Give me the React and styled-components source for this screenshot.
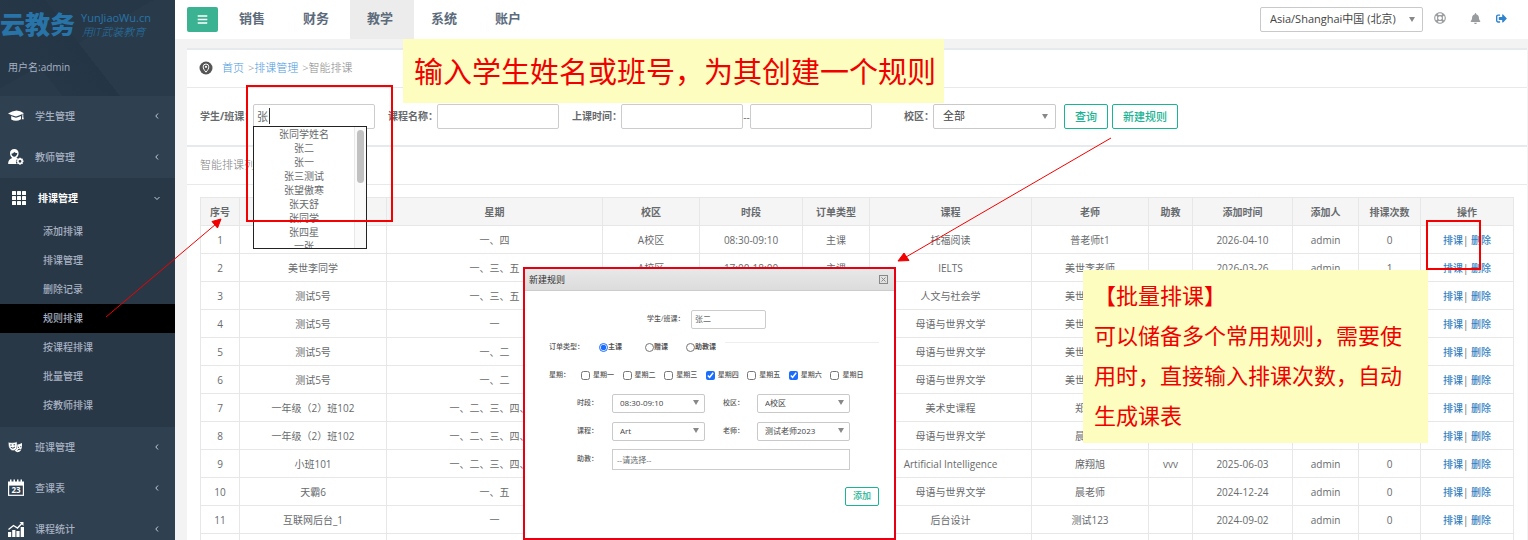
import { useState } from "react";
import styled, { createGlobalStyle, css } from "styled-components";
import { FaBars, FaBell, FaSignOutAlt, FaRegLifeRing } from "react-icons/fa";

const GlobalStyle = createGlobalStyle`
  *, *::before, *::after {
    box-sizing: border-box;
  }

  body {
    margin: 0;
    background: #f3f3f4;
    color: #676a6c;
    font-family: "Open Sans", "Noto Sans CJK SC", sans-serif;
    font-size: 10px;
    line-height: 14px;
  }

  button, input, select, textarea {
    font-family: inherit;
    color: inherit;
  }

  a {
    text-decoration: none;
  }
`;

const Shell = styled.div`
  position: relative;
  display: flex;
  height: 100vh;
  overflow: hidden;
`;

/* ---------- sidebar ---------- */

const Sidebar = styled.aside`
  flex: 0 0 175px;
  background: #2f4050;
  color: #a7b1c2;
  font-weight: 500;
`;

const Brand = styled.div`
  display: flex;
  flex-direction: column;
  gap: 18px;
  height: 96px;
  padding-top: 10px;
  background: linear-gradient(232deg, transparent 52%, #243545 52%, #263747 75%, transparent 75%),
    linear-gradient(150deg, #263848 45%, #293b4a 45%);
`;

const Logo = styled.div`
  display: flex;
  gap: 6px;
  height: 30px;
  color: #2874a8;
`;

const LogoName = styled.strong`
  font-size: 25px;
  font-weight: 900;
  line-height: 28px;
`;

const LogoText = styled.div`
  display: flex;
  flex-direction: column;
  font-size: 11px;
  line-height: 15px;
  white-space: nowrap;
`;

const Slogan = styled.span`
  padding-left: 1px;
  font-style: italic;
  font-weight: 300;
  line-height: 14px;
`;

const UserName = styled.div`
  padding-left: 8px;
  font-weight: 400;
  line-height: 18px;
`;

const MenuGroup = styled.div`
  background: ${({ $open }) => ($open ? "#293846" : "transparent")};
  padding-bottom: ${({ $open }) => ($open ? "7px" : "0")};
`;

const MenuItem = styled.a`
  display: grid;
  grid-template-columns: 16px 1fr 6px;
  gap: 11px;
  align-items: center;
  height: 41px;
  padding: 0 15px 2px 8px;
  color: inherit;

  svg {
    display: block;
    color: #fff;
  }

  ${({ $open }) =>
    $open &&
    css`
      height: 39px;
      padding-bottom: 0;
      padding-left: 11px;
      color: #fff;
      font-weight: 700;
    `}
`;

const SubItem = styled.a`
  display: block;
  height: 29px;
  padding-left: 43px;
  background: ${({ $active }) => ($active ? "#000" : "transparent")};
  color: inherit;
  line-height: 29px;
`;

/* ---------- top bar ---------- */

const Main = styled.main`
  flex: 1;
  min-width: 0;
`;

const TopBar = styled.header`
  display: flex;
  align-items: center;
  height: 39px;
  padding: 0 21px 0 12px;
  background: #fff;
`;

const MenuToggle = styled.button`
  display: flex;
  align-items: center;
  justify-content: center;
  width: 31px;
  height: 25px;
  margin-right: 4px;
  border: 0;
  border-radius: 2px;
  background: #3bb392;
  color: #fff;
`;

const Nav = styled.nav`
  display: flex;
  flex: 1;
`;

const NavLink = styled.a`
  width: 64px;
  height: 39px;
  padding-left: 17px;
  background: ${({ $active }) => ($active ? "#ececec" : "transparent")};
  color: #5c6b7c;
  font-size: 13px;
  font-weight: 700;
  line-height: 36px;
`;

const Tools = styled.div`
  display: flex;
  align-items: center;
  margin-left: 11px;
  padding-bottom: 3px;
  color: #999c9e;
`;

const IconButton = styled.button`
  display: flex;
  justify-content: center;
  width: 12px;
  margin-right: ${({ $gap }) => $gap || 0}px;
  padding: 0;
  border: 0;
  background: none;
  color: ${({ $blue }) => ($blue ? "#2f83cc" : "inherit")};
`;

/* ---------- form parts ---------- */

const SelectBox = styled.span`
  position: relative;
  display: inline-block;
  width: ${({ $width }) => $width}px;
  flex: none;

  &::after {
    content: "";
    position: absolute;
    top: 50%;
    right: ${({ $small }) => ($small ? 6 : 8)}px;
    margin-top: -3px;
    border: solid transparent;
    border-width: ${({ $small }) => ($small ? "5px 3px 0" : "5px 3px 0")};
    border-top-color: #888;
    pointer-events: none;
  }
`;

const Select = styled.select`
  display: block;
  width: 100%;
  height: ${({ $small }) => ($small ? 19 : 25)}px;
  padding: 0 16px 2px ${({ $small }) => ($small ? 7 : 9)}px;
  border: 1px solid #c9c9c9;
  border-radius: 2px;
  appearance: none;
  background: #fff;
  color: #444;
  font-size: ${({ $small }) => ($small ? 8 : 11)}px;
`;

const Input = styled.input`
  width: ${({ $small }) => ($small ? 75 : 122)}px;
  height: ${({ $small }) => ($small ? 19 : 25)}px;
  padding: 0 3px 2px;
  flex: none;
  border: 1px solid #ccc;
  border-radius: 2px;
  background: #fff;
  font-size: ${({ $small }) => ($small ? 8 : 11)}px;
  outline: none;
`;

const OutlineButton = styled.button`
  height: ${({ $small }) => ($small ? 19 : 25)}px;
  padding: 0 ${({ $small }) => ($small ? 7 : 10)}px 2px;
  border: 1px solid #1ab394;
  border-radius: 2px;
  background: #fff;
  color: #1ab394;
  font-size: ${({ $small }) => ($small ? 9 : 11)}px;
  font-weight: 500;
  white-space: nowrap;
`;

/* ---------- page ---------- */

const Panel = styled.section`
  margin: 9px 1px 0 12px;
  border-top: 2px solid #e7eaec;
  background: #fff;
`;

const Crumbs = styled.nav`
  display: flex;
  align-items: center;
  height: 38px;
  padding: 0 0 2px 12px;
  border-bottom: 1px solid #e7eaec;
  color: #888;
  font-size: 11px;
  font-weight: 300;

  svg {
    margin-right: 9px;
  }

  a {
    color: #4a98dc;
  }
`;

const Separator = styled.span`
  padding-left: 4px;
`;

const Filters = styled.form`
  display: flex;
  align-items: center;
  height: 59px;
  padding-left: 13px;
  border-bottom: 2px solid #e7eaec;
`;

const Field = styled.div`
  position: relative;
  display: flex;
  align-items: center;
  margin-right: ${({ $gap }) => $gap}px;
`;

const FieldLabel = styled.label`
  width: ${({ $width }) => $width}px;
  padding-bottom: 2px;
  font-weight: 700;
  white-space: nowrap;
`;

const Caret = styled.span`
  position: absolute;
  top: 4px;
  right: 105px;
  width: 1px;
  height: 16px;
  background: #333;
`;

const Dash = styled.span`
  width: 7px;
  text-align: center;
`;

const Suggestions = styled.ul`
  position: absolute;
  z-index: 2;
  top: 22px;
  right: 8px;
  width: 114px;
  height: 123px;
  margin: 0;
  padding: 0 12px 0 0;
  overflow: hidden;
  border: 1px solid #222;
  background: #fff;
  list-style: none;
  text-align: center;

  &::before {
    content: "";
    position: absolute;
    top: 0;
    right: 0;
    width: 12px;
    height: 100%;
    border-left: 1px solid #e8e8e8;
    background: #fafafa;
  }

  &::after {
    content: "";
    position: absolute;
    top: 3px;
    right: 2px;
    width: 7px;
    height: 53px;
    border-radius: 4px;
    background: #c1c1c1;
  }
`;

const ListTitle = styled.h5`
  height: 38px;
  margin: 0;
  padding-left: 13px;
  border-bottom: 1px solid #e7eaec;
  color: #808385;
  font-size: 11px;
  font-weight: 300;
  line-height: 36px;
`;

const TableWrap = styled.div`
  padding: 12px 13px;
`;

const Table = styled.table`
  width: 100%;
  border-collapse: collapse;
  table-layout: fixed;
  text-align: center;

  th, td {
    height: 28px;
    padding: 0;
    border: 1px solid #e7e7e7;
    white-space: nowrap;
  }

  th {
    background: #f5f5f6;
    font-weight: 700;
  }

  a {
    color: #337fc0;
    font-weight: 500;
  }
`;

/* ---------- dialog ---------- */

const Dialog = styled.section`
  position: absolute;
  z-index: 3;
  top: 267px;
  left: 523px;
  width: 373px;
  height: 273px;
  border: 2px solid #e60012;
  background: #fff;
  font-size: 7px;
  line-height: 10px;
`;

const DialogHead = styled.header`
  display: flex;
  align-items: center;
  justify-content: space-between;
  height: 22px;
  padding: 0 6px 0 4px;
  border-bottom: 1px solid #ccc;
  background: linear-gradient(#e8e8e8, #dcdcdc);
  color: #333;
  font-size: 9px;
`;

const CloseButton = styled.button`
  display: flex;
  padding: 0;
  border: 0;
  background: none;
`;

const DialogForm = styled.form`
  padding: 14px 15px 0 24px;
`;

const FormRow = styled.div`
  display: flex;
  align-items: center;
  height: 28px;
  padding-left: ${({ $indent }) => $indent || 0}px;
`;

const SmallLabel = styled.label`
  width: ${({ $width }) => $width}px;
  margin-left: ${({ $left }) => $left || 0}px;
  flex: none;
  color: #555;
  font-weight: 500;
  white-space: nowrap;
`;

const Choice = styled.label`
  display: flex;
  align-items: center;
  gap: ${({ $radio }) => ($radio ? 0 : 3)}px;
  width: ${({ $width }) => ($width ? `${$width}px` : "auto")};
  color: #555;
  font-weight: ${({ $radio }) => ($radio ? 700 : 500)};
  white-space: nowrap;

  input {
    width: 9px;
    height: 9px;
    margin: 0;
    accent-color: #1a6dff;
  }
`;

const Days = styled.div`
  display: grid;
  grid-template-columns: repeat(7, 1fr);
  flex: 1;
  margin-right: 7px;
`;

const Rule = styled.hr`
  flex: 1;
  margin: 0 0 10px;
  border: 0;
  border-top: 1px solid #eee;
`;

const AssistantInput = styled(Input)`
  width: 238px;
  height: 21px;
  padding: 0 4px;
  border-radius: 0;
`;

const DialogFoot = styled.div`
  display: flex;
  justify-content: flex-end;
  padding-top: 14px;
`;

/* ---------- annotations ---------- */

const Note = styled.p`
  position: absolute;
  z-index: 4;
  top: ${({ $top }) => $top}px;
  left: ${({ $left }) => $left}px;
  margin: 0;
  padding: ${({ $large }) => ($large ? "0 8px 2px 11px" : "4px 11px 9px")};
  width: ${({ $large }) => ($large ? 541 : 345)}px;
  background: #fdfdbf;
  color: #f00000;
  font-family: "Noto Sans CJK SC", sans-serif;
  font-size: ${({ $large }) => ($large ? 29 : 22)}px;
  line-height: ${({ $large }) => ($large ? 62 : 40)}px;
  white-space: nowrap;
`;

const Highlight = styled.div`
  position: absolute;
  z-index: 3;
  top: ${({ $top }) => $top}px;
  left: ${({ $left }) => $left}px;
  width: ${({ $width }) => $width}px;
  height: ${({ $height }) => $height}px;
  border: ${({ $line }) => $line}px solid #f50000;
  pointer-events: none;
`;

const Arrows = styled.svg`
  position: absolute;
  z-index: 5;
  inset: 0;
  width: 100%;
  height: 100%;
  pointer-events: none;
`;

/* ---------- icons ---------- */

const Chevron = ({ down }) => (
  <svg width="6" height="8" viewBox="0 0 6 8" fill="none" stroke="#c5ccd6">
    <path d={down ? "M0.5 3L3 5.5L5.5 3" : "M4 1.5L1.8 4L4 6.5"} />
  </svg>
);

const StudentIcon = () => (
  <svg width="16" height="12" viewBox="0 0 16 12" fill="#fff">
    <path d="M0 3.600Q4 1 8.500.500Q12 .800 16 3.300Q12.500 5.300 8 6.600Q3.500 5.600 0 3.600z" />
    <path d="M3.200 6.100Q5.500 7.200 8 7.700Q10.500 7.200 13 5.900V9.200Q8 12.400 3.200 9.400z" />
    <path d="M14.300 4.300h1v2.500l.5 2.400h-2l.5-2.400z" />
  </svg>
);

const TeacherIcon = () => (
  <svg width="16" height="16" viewBox="0 0 16 16" fill="#fff">
    <path d="M6.3 0C3.6 0 2 1.8 2 4.3c0 2 .9 3.700 2.200 4.600C2 9.600.4 11 .1 14.200c0 .6.300.9.800.9h7.800a4.200 4.200 0 0 1 1.100-5.600l-1.400-.7c1.300-1 2.200-2.500 2.200-4.500C10.600 1.800 9 0 6.300 0zm0 2.900c1 .9 2.100 1.200 3 1.200-.1 2-1.400 3.700-3 3.700S3.500 6.200 3.400 4.700c1.200-.2 2.200-.8 2.900-1.800z" />
    <path
      fillRule="evenodd"
      d="M11.300 8.800h1.400l.3 1 1-.5 1 1-.5 1 1 .3v1.400l-1 .3.5 1-1 1-1-.5-.3 1h-1.400l-.3-1-1 .5-1-1 .5-1-1-.3v-1.400l1-.3-.5-1 1-1 1 .5zM12 10.900a1.400 1.400 0 1 0 0 2.800 1.400 1.400 0 0 0 0-2.800z"
    />
  </svg>
);

const GridIcon = () => (
  <svg width="16" height="16" viewBox="0 0 16 16" fill="#fff">
    {[1, 6, 11].map((y) =>
      [1, 6, 11].map((x) => (
        <rect key={`${x}-${y}`} x={x} y={y} width="4" height="4" rx="0.5" />
      ))
    )}
  </svg>
);

const MasksIcon = () => (
  <svg width="15" height="12" viewBox="0 0 15 12">
    <path d="M6.500 3.500Q10 4.200 14 2Q14.600 7 12.800 9.500Q11.500 11.300 9.500 11.300Q7.500 11 6.500 9z" fill="#fff" />
    <path d="M10 6.300h1M12.300 5.700h1M9.500 9.300Q11 7.500 12.500 8.500" fill="none" stroke="#2f4050" />
    <path
      d="M.3 1.300Q4.500 2.500 9 .800Q9.500 5 8.500 7.500Q7 9.800 5 9.800Q2.500 9.500 1 6.500Q.2 4 .3 1.300z"
      fill="#fff"
      stroke="#2f4050"
      strokeWidth="0.500"
    />
    <path d="M2.200 4h1.600M5.500 3.800h1.600M2.800 6.300Q5 8.300 7 6" fill="none" stroke="#2f4050" />
  </svg>
);

const CalendarIcon = () => (
  <svg width="16" height="17" viewBox="0 0 16 17">
    <path
      fill="#fff"
      d="M0 6V2.500h2V.5h1.500v2h2V.5H7v2h2V.5h1.500v2h2V.5H14v2h2V6z"
    />
    <rect x="0.600" y="6" width="14.800" height="10.300" fill="none" stroke="#fff" strokeWidth="1.200" />
    <text x="8" y="14.200" fill="#fff" fontSize="8" fontWeight="700" textAnchor="middle">
      23
    </text>
  </svg>
);

const StatsIcon = () => (
  <svg width="16" height="16" viewBox="0 0 16 16" fill="#fff">
    <path d="M0 11h3.200v5H0zM4.200 9h3.200v7H4.200zM8.400 10h3.200v6H8.400zM12.700 6H16v10h-3.300z" />
    <path
      d="M.5 8.500L5.500 4.500L9.500 7L14 2.200"
      fill="none"
      stroke="#fff"
      strokeWidth="1.400"
    />
    <path d="M11.500 1H15.500V5z" />
  </svg>
);

const LocationIcon = () => (
  <svg width="14" height="14" viewBox="0 0 14 14">
    <circle cx="7" cy="7" r="6.500" fill="#555" />
    <path
      d="M7 11.200C5 8.900 4.200 7.300 4.200 5.800a2.800 2.800 0 0 1 5.600 0C9.800 7.300 9 8.900 7 11.200z"
      fill="none"
      stroke="#fff"
    />
    <circle cx="7" cy="5.800" r="1.100" fill="#fff" />
  </svg>
);

const CloseIcon = () => (
  <svg width="9" height="9" viewBox="0 0 9 9" fill="none" stroke="#888">
    <rect x="0.500" y="0.500" width="8" height="8" />
    <path d="M2.500 2.500L6.500 6.500M6.500 2.500L2.500 6.500" />
  </svg>
);

/* ---------- data ---------- */

const navItems = ["销售", "财务", "教学", "系统", "账户"];

const menu = [
  { label: "学生管理", icon: <StudentIcon /> },
  { label: "教师管理", icon: <TeacherIcon /> },
  {
    label: "排课管理",
    icon: <GridIcon />,
    items: [
      "添加排课",
      "排课管理",
      "删除记录",
      "规则排课",
      "按课程排课",
      "批量管理",
      "按教师排课",
    ],
  },
  { label: "班课管理", icon: <MasksIcon /> },
  { label: "查课表", icon: <CalendarIcon /> },
  { label: "课程统计", icon: <StatsIcon /> },
];

const suggestions = [
  "张同学姓名",
  "张二",
  "张一",
  "张三测试",
  "张望傲寒",
  "张天舒",
  "张同学",
  "张四星",
  "一张",
];

const columns = [
  ["序号", 39],
  ["学生/班课", 147],
  ["星期"],
  ["校区", 97],
  ["时段", 103],
  ["订单类型", 67],
  ["课程", 162],
  ["老师", 117],
  ["助教", 44],
  ["添加时间", 100],
  ["添加人", 66],
  ["排课次数", 62],
  ["操作", 93],
];

const rows = [
  ["张同学姓名", "一、四", "08:30-09:10", "托福阅读", "普老师t1", "", "2026-04-10", 0],
  ["美世李同学", "一、三、五", "17:00-18:00", "IELTS", "美世李老师", "", "2026-03-26", 1],
  ["测试5号", "一、三、五", "08:30-09:10", "人文与社会学", "美世李老师", "", "2026-03-20", 0],
  ["测试5号", "一", "08:30-09:10", "母语与世界文学", "美世李老师", "", "2026-03-20", 0],
  ["测试5号", "一、二", "08:30-09:10", "母语与世界文学", "美世李老师", "", "2026-03-20", 0],
  ["测试5号", "一、二", "08:30-09:10", "母语与世界文学", "美世李老师", "", "2026-03-20", 0],
  ["一年级（2）班102", "一、二、三、四、五", "08:30-09:10", "美术史课程", "郑老师", "", "2025-06-10", 0],
  ["一年级（2）班102", "一、二、三、四、五", "08:30-09:10", "母语与世界文学", "晨老师", "", "2025-06-10", 0],
  ["小班101", "一、二、三、四、五", "08:30-09:10", "Artificial Intelligence", "席翔旭", "vvv", "2025-06-03", 0],
  ["天霸6", "一、五", "08:30-09:10", "母语与世界文学", "晨老师", "", "2024-12-24", 0],
  ["互联网后台_1", "一", "08:30-09:10", "后台设计", "测试123", "", "2024-09-02", 0],
];

const days = ["一", "二", "三", "四", "五", "六", "日"];

/* ---------- components ---------- */

const SelectField = ({ id, label, value, width, small }) => (
  <SelectBox $width={width} $small={small}>
    <Select id={id} aria-label={label} $small={small} defaultValue={value}>
      <option>{value}</option>
    </Select>
  </SelectBox>
);

const SideMenu = () => (
  <Sidebar>
    <Brand>
      <Logo>
        <LogoName>云教务</LogoName>
        <LogoText>
          <span>YunJiaoWu.cn</span>
          <Slogan>用IT武装教育</Slogan>
        </LogoText>
      </Logo>
      <UserName>用户名:admin</UserName>
    </Brand>
    {menu.map(({ label, icon, items }) => (
      <MenuGroup key={label} $open={Boolean(items)}>
        <MenuItem href="#" $open={Boolean(items)}>
          {icon}
          <span>{label}</span>
          <Chevron down={Boolean(items)} />
        </MenuItem>
        {items?.map((item) => (
          <SubItem key={item} href="#" $active={item === "规则排课"}>
            {item}
          </SubItem>
        ))}
      </MenuGroup>
    ))}
  </Sidebar>
);

const Header = () => (
  <TopBar>
    <MenuToggle aria-label="菜单">
      <FaBars size={11} />
    </MenuToggle>
    <Nav>
      {navItems.map((item) => (
        <NavLink key={item} href="#" $active={item === "教学"}>
          {item}
        </NavLink>
      ))}
    </Nav>
    <SelectField
      id="timezone"
      label="时区"
      value="Asia/Shanghai中国 (北京)"
      width={163}
    />
    <Tools>
      <IconButton aria-label="帮助" $gap={23}>
        <FaRegLifeRing size={12} />
      </IconButton>
      <IconButton aria-label="通知" $gap={14}>
        <FaBell size={11} />
      </IconButton>
      <IconButton aria-label="退出" $blue>
        <FaSignOutAlt size={11} />
      </IconButton>
    </Tools>
  </TopBar>
);

const FilterBar = () => {
  const [keyword, setKeyword] = useState("张");
  return (
    <Filters>
      <Field $gap={13}>
        <FieldLabel htmlFor="student" $width={53}>
          学生/班课：
        </FieldLabel>
        <Input
          id="student"
          value={keyword}
          onChange={(e) => setKeyword(e.target.value)}
        />
        <Caret />
        <Suggestions>
          {suggestions.map((name) => (
            <li key={name}>{name}</li>
          ))}
        </Suggestions>
      </Field>
      <Field $gap={13}>
        <FieldLabel htmlFor="course" $width={49}>
          课程名称：
        </FieldLabel>
        <Input id="course" />
      </Field>
      <Field $gap={32}>
        <FieldLabel htmlFor="from" $width={49}>
          上课时间：
        </FieldLabel>
        <Input id="from" />
        <Dash>--</Dash>
        <Input aria-label="结束时间" />
      </Field>
      <Field $gap={8}>
        <FieldLabel htmlFor="campus" $width={29}>
          校区：
        </FieldLabel>
        <SelectField id="campus" value="全部" width={123} />
      </Field>
      <Field $gap={4}>
        <OutlineButton type="button">查询</OutlineButton>
      </Field>
      <OutlineButton type="button">新建规则</OutlineButton>
    </Filters>
  );
};

const RuleTable = () => (
  <Table>
    <colgroup>
      {columns.map(([name, width]) => (
        <col key={name} width={width} />
      ))}
    </colgroup>
    <thead>
      <tr>
        {columns.map(([name]) => (
          <th key={name}>{name}</th>
        ))}
      </tr>
    </thead>
    <tbody>
      {rows.map(([student, week, time, course, teacher, helper, date, count], i) => (
        <tr key={i}>
          <td>{i + 1}</td>
          <td>{student}</td>
          <td>{week}</td>
          <td>A校区</td>
          <td>{time}</td>
          <td>主课</td>
          <td>{course}</td>
          <td>{teacher}</td>
          <td>{helper}</td>
          <td>{date}</td>
          <td>admin</td>
          <td>{count}</td>
          <td>
            <a href="#">排课</a>| <a href="#">删除</a>
          </td>
        </tr>
      ))}
      <tr>
        {columns.map(([name]) => (
          <td key={name} />
        ))}
      </tr>
    </tbody>
  </Table>
);

const RuleDialog = () => (
  <Dialog role="dialog" aria-label="新建规则">
    <DialogHead>
      <span>新建规则</span>
      <CloseButton aria-label="关闭">
        <CloseIcon />
      </CloseButton>
    </DialogHead>
    <DialogForm>
      <FormRow $indent={98}>
        <SmallLabel htmlFor="rule-student" $width={44}>
          学生/班课：
        </SmallLabel>
        <Input id="rule-student" $small defaultValue="张二" />
      </FormRow>
      <FormRow>
        <SmallLabel as="span" $width={50}>
          订单类型：
        </SmallLabel>
        <Choice $radio $width={46}>
          <input type="radio" name="type" defaultChecked />
          主课
        </Choice>
        <Choice $radio $width={41}>
          <input type="radio" name="type" />
          赠课
        </Choice>
        <Choice $radio $width={39}>
          <input type="radio" name="type" />
          助教课
        </Choice>
        <Rule />
      </FormRow>
      <FormRow>
        <SmallLabel as="span" $width={32}>
          星期：
        </SmallLabel>
        <Days>
          {days.map((day) => (
            <Choice key={day}>
              <input
                type="checkbox"
                defaultChecked={day === "四" || day === "六"}
              />
              星期{day}
            </Choice>
          ))}
        </Days>
      </FormRow>
      <FormRow $indent={28}>
        <SmallLabel htmlFor="rule-time" $width={35}>
          时段：
        </SmallLabel>
        <SelectField id="rule-time" value="08:30-09:10" width={93} small />
        <SmallLabel htmlFor="rule-campus" $width={34} $left={18}>
          校区：
        </SmallLabel>
        <SelectField id="rule-campus" value="A校区" width={93} small />
      </FormRow>
      <FormRow $indent={28}>
        <SmallLabel htmlFor="rule-course" $width={35}>
          课程：
        </SmallLabel>
        <SelectField id="rule-course" value="Art" width={93} small />
        <SmallLabel htmlFor="rule-teacher" $width={34} $left={18}>
          老师：
        </SmallLabel>
        <SelectField id="rule-teacher" value="测试老师2023" width={93} small />
      </FormRow>
      <FormRow $indent={28}>
        <SmallLabel htmlFor="rule-helper" $width={35}>
          助教：
        </SmallLabel>
        <AssistantInput id="rule-helper" $small defaultValue="--请选择--" />
      </FormRow>
      <DialogFoot>
        <OutlineButton type="button" $small>
          添加
        </OutlineButton>
      </DialogFoot>
    </DialogForm>
  </Dialog>
);

const App = () => (
  <Shell>
    <GlobalStyle />
    <SideMenu />
    <Main>
      <Header />
      <Panel>
        <Crumbs>
          <LocationIcon />
          <a href="#">首页</a>
          <Separator>&gt;</Separator>
          <a href="#">排课管理</a>
          <Separator>&gt;</Separator>
          <span>智能排课</span>
        </Crumbs>
        <FilterBar />
        <ListTitle>智能排课列表</ListTitle>
        <TableWrap>
          <RuleTable />
        </TableWrap>
      </Panel>
    </Main>
    <RuleDialog />
    <Highlight $top={85} $left={246} $width={147} $height={137} $line={2} />
    <Highlight $top={220} $left={1426} $width={55} $height={50} $line={2} />
    <Note $large $top={39} $left={403}>
      输入学生姓名或班号，为其创建一个规则
    </Note>
    <Note $top={270} $left={1083}>
      【批量排课】
      <br />
      可以储备多个常用规则，需要使
      <br />
      用时，直接输入排课次数，自动
      <br />
      生成课表
    </Note>
    <Arrows stroke="#f00000" fill="#f00000" strokeWidth="1">
      <path d="M106 317L216 224" />
      <path d="M221 219L217.500 228L212 221.500Z" />
      <path d="M1111 138L906 257" />
      <path d="M898 261L904 253L909 260.500Z" />
    </Arrows>
  </Shell>
);

export default App;
